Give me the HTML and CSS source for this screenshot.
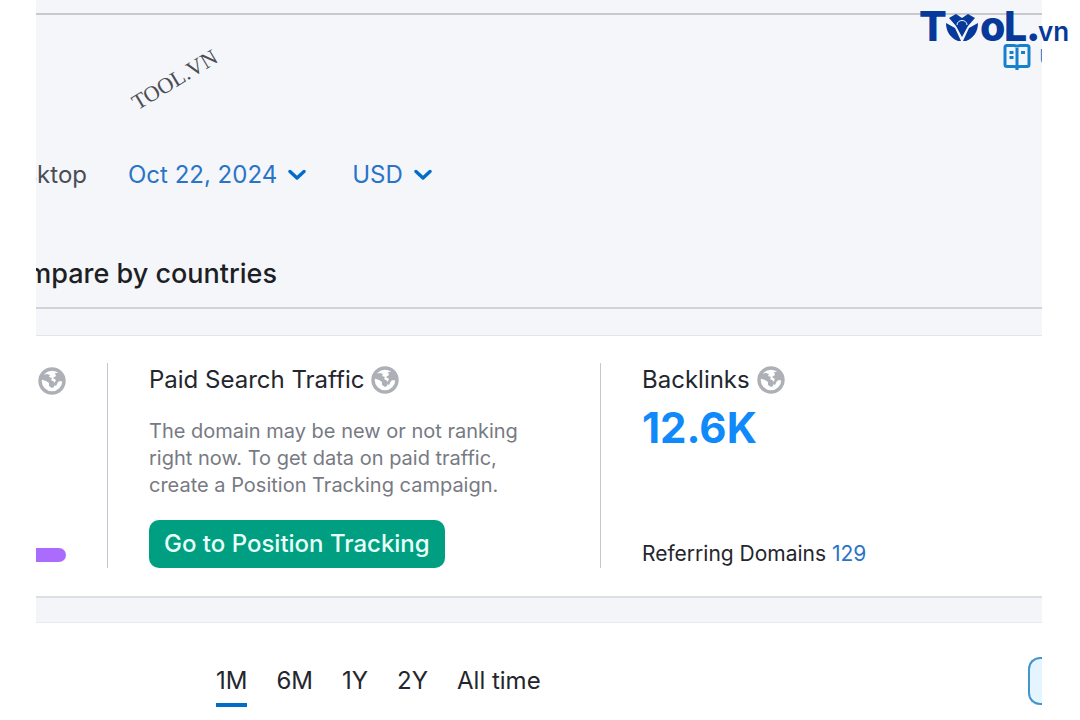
FILE: index.html
```html
<!DOCTYPE html>
<html lang="en">
<head>
<meta charset="utf-8">
<meta name="viewport" content="width=device-width, initial-scale=1">
<title>Domain Overview</title>
<link rel="stylesheet" href="styles.css">
</head>
<body>
<svg class="defs" aria-hidden="true">
  <symbol id="globe" viewBox="0 0 28 28">
    <circle cx="14" cy="14" r="12" fill="#fff" stroke="#adb0b6" stroke-width="3.4"/>
    <path fill="#adb0b6" d="M2 12 4 8 9 7l3 1-1 2 3 1-1 2 2 1 2 2-1 4-2 1-3-2v-3l-3-2-3-1-3-1z"/>
    <path fill="#adb0b6" d="M17 6l4 0 4 5 1 4-4-1-2 1-2 4-2-1 1-3 1-2-3-2 3-2z"/>
  </symbol>
  <symbol id="chevron" viewBox="0 0 18 12">
    <path d="M2 2.500 9 9l7-6.500" fill="none" stroke="#006dca" stroke-width="3.4" stroke-linecap="round" stroke-linejoin="round"/>
  </symbol>
</svg>
<div class="page">
  <svg class="logo" viewBox="0 0 150 42" role="img" aria-label="TooL.vn">
    <text class="logo-big" x="-1" y="35">T</text>
    <g fill="#06399a">
      <path d="M26 17 35 22 41 35 38 35C30 32 26 25 26 17z"/>
      <path d="M58 17 49 22 43 35 46 35C54 32 58 25 58 17z"/>
      <path d="M29 12 36 8 42 12 48 8 55 12 48 20 42 31 36 20z"/>
    </g>
    <path d="M37 19C37 13 47 13 47 19" fill="none" stroke="#f4f6fa" stroke-width="1"/>
    <text class="logo-big" x="60" y="35">o</text>
    <text class="logo-big" x="84" y="35">L</text>
    <text class="logo-big" x="106" y="35">.</text>
    <text class="logo-small" x="118" y="35">vn</text>
  </svg>
  <span class="watermark">TOOL.VN</span>
  <header class="header">
    <div class="topbar"></div>
    <a class="manual" href="#manual">
      <svg width="28" height="28" viewBox="0 0 28 28" aria-hidden="true">
        <path d="M4 2.500h7q3 0 3 2q0-2 3-2h7q2 0 2 2v17q0 2-2 2h-7q-3 0-3 2q0-2-3-2h-7q-2 0-2-2v-17q0-2 2-2zM14 5v22" fill="none" stroke="#1680cc" stroke-width="3"/>
        <path d="M6.500 9.500h4M6.500 14.500h4M18 9.500h4" fill="none" stroke="#1680cc" stroke-width="3"/>
      </svg>
      <span>User manual</span>
    </a>
    <div class="filters">
      <div class="device"><span>Desktop</span></div>
      <button class="filter" type="button">Oct 22, 2024 <svg width="18" height="12"><use href="#chevron"/></svg></button>
      <button class="filter" type="button">USD <svg width="18" height="12"><use href="#chevron"/></svg></button>
    </div>
    <nav class="tabs"><a href="#compare">Compare by countries</a></nav>
  </header>
  <main>
    <section class="metrics">
      <div class="metric metric-cut">
        <svg width="28" height="28" aria-hidden="true"><use href="#globe"/></svg>
        <div class="bar"></div>
      </div>
      <div class="metric metric-paid">
        <h2>Paid Search Traffic <svg width="28" height="28" aria-hidden="true"><use href="#globe"/></svg></h2>
        <p>The domain may be new or not ranking<br>right now. To get data on paid traffic,<br>create a Position Tracking campaign.</p>
        <button class="cta" type="button">Go to Position Tracking</button>
      </div>
      <div class="metric metric-links">
        <h2>Backlinks <svg width="28" height="28" aria-hidden="true"><use href="#globe"/></svg></h2>
        <strong>12.6K</strong>
        <div class="referring">Referring Domains <a href="#domains">129</a></div>
      </div>
    </section>
    <section class="trend">
      <div class="periods">
        <button class="active" type="button">1M</button>
        <button type="button">6M</button>
        <button type="button">1Y</button>
        <button type="button">2Y</button>
        <button type="button">All time</button>
      </div>
      <button class="export" type="button" aria-label="Export"></button>
    </section>
  </main>
</div>
</body>
</html>
```
FILE: styles.css
```css
* { box-sizing: border-box; }
body {
  margin: 0;
  background: #fff;
  color: #24262d;
  font-family: Inter, "Liberation Sans", sans-serif;
  font-size: 24px;
  line-height: 32px;
}
a { color: inherit; text-decoration: none; }
button { margin: 0; padding: 0; border: 0; background: none; color: inherit; font: inherit; cursor: pointer; }
h2, p { margin: 0; }
svg { flex: none; }
.defs { position: absolute; width: 0; height: 0; }
.page { position: relative; padding: 0 38px 0 36px; }

.logo { position: absolute; z-index: 2; top: 6px; right: 10px; width: 150px; height: 42px; overflow: visible; }
.logo text { fill: #06399a; }
.logo-big { font-size: 41px; font-weight: 800; }
.logo-small { font-size: 26px; font-weight: 600; }
.watermark {
  position: absolute;
  top: 64px;
  left: 127px;
  color: #4a4d53;
  font-family: "Liberation Serif", serif;
  font-size: 22px;
  transform: rotate(-31deg);
}

.header { overflow: hidden; background: #f4f6fa; border-bottom: 1px solid #e3e5ea; }
.topbar { height: 15px; border-bottom: 2px solid #c8cad0; }
.manual {
  display: flex;
  align-items: center;
  gap: 8px;
  width: 39px;
  height: 32px;
  margin: 26px 0 0 auto;
  overflow: hidden;
  color: #1680cc;
  font-size: 22px;
  white-space: nowrap;
}
.filters { display: flex; align-items: center; margin-top: 86px; }
.device { display: flex; justify-content: flex-end; width: 51px; margin-right: 41px; overflow: hidden; color: #4a4d55; }
.filter { display: flex; align-items: center; gap: 11px; margin-right: 46px; color: #2a74c8; }
.tabs {
  display: flex;
  justify-content: flex-end;
  width: 241px;
  margin-top: 67px;
  color: #1d1f25;
  font-size: 27px;
  font-weight: 500;
}
.tabs a { white-space: nowrap; }
.header::after { content: ""; display: block; margin-top: 17px; height: 26px; border-top: 2px solid #d0d3da; }

.metrics { display: flex; padding: 27px 0 28px; border-bottom: 2px solid #dcdfe3; }
.metric { display: flex; flex-direction: column; align-items: flex-start; min-height: 205px; }
.metric + .metric { padding-left: 41px; border-left: 1px solid #c4c7cf; }
.metric-cut { justify-content: space-between; width: 71px; padding: 4px 0 6px 2px; }
.metric-paid { width: 493px; }
.metric-links { flex: 1; }
.metric h2 { display: flex; align-items: center; gap: 7px; font-size: 24px; font-weight: 400; line-height: 34px; }
.bar { width: 30px; height: 14px; margin-left: -2px; border-radius: 0 7px 7px 0; background: #ab6cfe; }
.metric p { margin-top: 21px; color: #777a83; font-size: 20px; line-height: 27px; }
.cta { margin-top: auto; height: 48px; padding: 0 15px; border-radius: 10px; background: #009f81; color: #e9fffa; font-weight: 500; }
.metric strong { margin-top: 6px; color: #1089fa; font-size: 42px; font-weight: 700; line-height: 50px; }
.referring { margin-top: auto; font-size: 21px; line-height: 28px; }
.referring a { color: #2a74c8; }

.trend {
  display: flex;
  justify-content: space-between;
  align-items: flex-start;
  margin-top: 24px;
  padding-top: 34px;
  border-top: 1px solid #e8eaed;
  box-shadow: 0 -24px 0 #f3f5f8;
}
.periods { display: flex; gap: 29px; padding-left: 180px; }
.periods button { height: 50px; padding-top: 2px; border-bottom: 4px solid transparent; }
.periods .active { border-color: #006dca; }
.export { width: 14px; height: 48px; border: 2px solid #4595cc; border-right: 0; border-radius: 12px 0 0 12px; background: #e5f5ff; }
```
